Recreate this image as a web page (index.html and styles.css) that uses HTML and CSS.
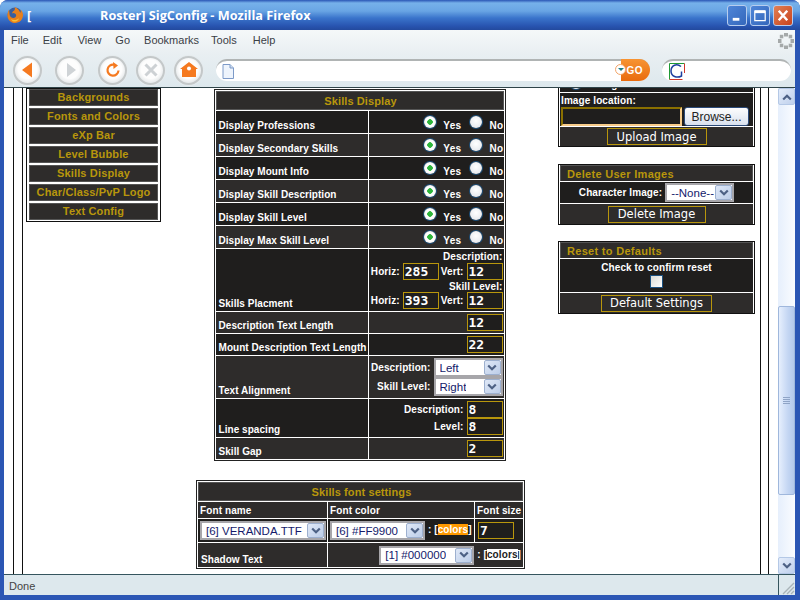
FILE: index.html
```html
<!DOCTYPE html>
<html lang="en">
<head>
<meta charset="utf-8">
<title>Roster SigConfig - Mozilla Firefox</title>
<link rel="stylesheet" href="styles.css">
</head>
<body>
<svg class="defs" width="0" height="0"><defs><symbol id="chev" viewBox="0 0 10 8"><path d="M1.2 1.5L5 5.3L8.8 1.5" fill="none" stroke="#4d6185" stroke-width="2.2"/></symbol></defs></svg>
<div class="window">
  <header class="titlebar">
    <svg class="fxlogo" width="18" height="18" viewBox="0 0 18 18"><circle cx="9" cy="9" r="7.5" fill="#3a5f9e"/><path d="M3 3.5C2 6 1 8 1.6 11C2.6 15.2 6 17 9 17C13.6 17 17 13.400 17 9C17 6.500 15.800 4.500 14.500 3.400C15 5 14.800 6 14.200 6.800C13.500 4.200 11.500 1.800 8.500 1C9.300 2.600 9 3.800 8 4.700C6.800 5.400 6 6.200 6.200 7.500C6.800 6.800 8 6.800 9 7.500C10.800 8.500 10.500 11 8.500 11.800C6.500 12.500 4.500 11.500 3.800 9.500C3.200 7.500 3.500 5.500 3 3.500Z" fill="#e8801c"/><path d="M5 13C7 14.500 11 14.500 13 12C12.500 15 9.500 16 7.500 15.500C6.500 15.200 5.500 14.200 5 13Z" fill="#f7c338"/></svg>
    <span class="title-a">[</span>
    <span class="title-b">Roster] SigConfig - Mozilla Firefox</span>
    <div class="winbtns">
      <span class="winbtn"><svg width="19" height="19" viewBox="0 0 19 19"><rect x="5" y="12" width="7" height="3" fill="#fff"/></svg></span>
      <span class="winbtn"><svg width="19" height="19" viewBox="0 0 19 19"><path d="M4 5h11v10H4z" fill="none" stroke="#fff" stroke-width="1.300"/><rect x="4" y="4" width="11" height="3" fill="#fff"/></svg></span>
      <span class="winbtn close"><svg width="19" height="19" viewBox="0 0 19 19"><path d="M5 4.500L14 14.500M14 4.500L5 14.500" stroke="#fff" stroke-width="2.600"/></svg></span>
    </div>
  </header>
  <nav class="menubar">
    <span class="m1">File</span><span class="m2">Edit</span><span class="m3">View</span><span class="m4">Go</span><span class="m5">Bookmarks</span><span class="m6">Tools</span><span class="m7">Help</span>
    <svg class="throbber" width="18" height="18" viewBox="0 0 18 18"><g fill="#a5a9a9"><rect x="7" y="1" width="4" height="3.500"/><rect x="7" y="13.500" width="4" height="3.500"/><rect x="1" y="7" width="3.500" height="4"/><rect x="13.500" y="7" width="3.500" height="4"/><rect x="2.800" y="2.800" width="3.500" height="3.500"/><rect x="11.700" y="2.800" width="3.500" height="3.500"/><rect x="2.800" y="11.700" width="3.500" height="3.500"/><rect x="11.700" y="11.700" width="3.500" height="3.500"/></g></svg>
  </nav>
  <div class="toolbar">
    <span class="tb"><svg width="16" height="18" viewBox="0 0 16 18"><path d="M12 1.500V16.500L2 9Z" fill="#f5791f"/></svg></span>
    <span class="tb tb2"><svg width="16" height="18" viewBox="0 0 16 18"><path d="M5 2V16L14 9Z" fill="#cfd3d6"/></svg></span>
    <span class="tb tb3"><svg width="18" height="18" viewBox="0 0 18 18"><path d="M14.500 9.500A5.500 5.500 0 1 1 10 3.700" fill="none" stroke="#f5791f" stroke-width="2.200"/><path d="M9 1L14 4.500L9.500 8Z" fill="#f5791f"/></svg></span>
    <span class="tb tb4"><svg width="16" height="16" viewBox="0 0 16 16"><path d="M2.500 2.500L13.500 13.500M13.500 2.500L2.500 13.500" stroke="#cdd1d4" stroke-width="3"/></svg></span>
    <span class="tb tb5"><svg width="18" height="18" viewBox="0 0 18 18"><path d="M9 1L18 8H16V16H2V8H0Z" fill="#f5791f"/><circle cx="9" cy="7.500" r="2" fill="#fff"/></svg></span>
    <div class="urlbar">
      <svg width="12" height="15" viewBox="0 0 12 15"><path d="M1 .5H8L11.500 4V14.500H1Z" fill="#eef4fc" stroke="#7d9ac8"/><path d="M8 .5V4H11.500" fill="#cfdcf0" stroke="#7d9ac8"/></svg>
      <span class="go"><span class="go-arrow"></span>GO</span>
    </div>
    <div class="search">
      <svg width="16" height="17" viewBox="0 0 16 17"><path d="M.5 16.500V.5H15.500" fill="none" stroke="#1f9a35"/><path d="M.5 16.500H13.500M15.500 .5V10" fill="none" stroke="#d0362a"/><path d="M12 3.500C8 0 2 2 2 8C2 13.500 8 15.500 12.500 13V8.500" fill="none" stroke="#1d3f9e" stroke-width="1.500"/></svg>
    </div>
  </div>
  <div class="viewport">
    <main class="page">
      <div class="frame">
        <div class="frame-in">
          <div class="col-nav">
            <ul class="sidenav">
              <li>Backgrounds</li><li>Fonts and Colors</li><li>eXp Bar</li><li>Level Bubble</li><li>Skills Display</li><li>Char/Class/PvP Logo</li><li>Text Config</li>
            </ul>
          </div>
          <div class="col-mid">
            <table class="tbl skills">
              <colgroup><col class="c-lab"><col></colgroup>
              <tr class="hd"><th colspan="2">Skills Display</th></tr>
              <tr class="r a"><td class="lab">Display Professions</td><td class="rad"><input type="radio" name="p1" checked> Yes <input type="radio" name="p1"> No</td></tr>
              <tr class="r b"><td class="lab">Display Secondary Skills</td><td class="rad"><input type="radio" name="p2" checked> Yes <input type="radio" name="p2"> No</td></tr>
              <tr class="r a"><td class="lab">Display Mount Info</td><td class="rad"><input type="radio" name="p3" checked> Yes <input type="radio" name="p3"> No</td></tr>
              <tr class="r b"><td class="lab">Display Skill Description</td><td class="rad"><input type="radio" name="p4" checked> Yes <input type="radio" name="p4"> No</td></tr>
              <tr class="r a"><td class="lab">Display Skill Level</td><td class="rad"><input type="radio" name="p5" checked> Yes <input type="radio" name="p5"> No</td></tr>
              <tr class="r b"><td class="lab">Display Max Skill Level</td><td class="rad"><input type="radio" name="p6" checked> Yes <input type="radio" name="p6"> No</td></tr>
              <tr class="a h62"><td class="lab">Skills Placment</td><td class="val">
                <div class="cap">Description:</div>
                <div class="pair"><span>Horiz:</span><input class="ti w36" value="285"><span class="gap">Vert:</span><input class="ti w36" value="12"></div>
                <div class="cap">Skill Level:</div>
                <div class="pair"><span>Horiz:</span><input class="ti w36" value="393"><span class="gap">Vert:</span><input class="ti w36" value="12"></div>
              </td></tr>
              <tr class="b h21"><td class="lab">Description Text Length</td><td class="val end"><input class="ti w36" value="12"></td></tr>
              <tr class="a h21"><td class="lab">Mount Description Text Length</td><td class="val end"><input class="ti w36" value="22"></td></tr>
              <tr class="b h42"><td class="lab">Text Alignment</td><td class="val">
                <div class="selrow"><span>Description:</span><span class="sel s69"><span class="stext">Left</span><span class="sbtn"><svg width="10" height="8"><use href="#chev"/></svg></span></span></div>
                <div class="selrow"><span>Skill Level:</span><span class="sel s69"><span class="stext">Right</span><span class="sbtn"><svg width="10" height="8"><use href="#chev"/></svg></span></span></div>
              </td></tr>
              <tr class="a h38"><td class="lab">Line spacing</td><td class="val">
                <div class="selrow tight"><span>Description:</span><input class="ti w36" value="8"></div>
                <div class="selrow tight"><span>Level:</span><input class="ti w36" value="8"></div>
              </td></tr>
              <tr class="b h21"><td class="lab">Skill Gap</td><td class="val end"><input class="ti w36" value="2"></td></tr>
            </table>
            <table class="tbl fonts">
              <colgroup><col class="c-f1"><col class="c-f2"><col></colgroup>
              <tr class="hd"><th colspan="3">Skills font settings</th></tr>
              <tr class="b fh"><td>Font name</td><td>Font color</td><td>Font size</td></tr>
              <tr class="a fr"><td><span class="sel s126"><span class="stext">[6] VERANDA.TTF</span><span class="sbtn"><svg width="10" height="8"><use href="#chev"/></svg></span></span></td>
                <td class="cc"><span class="sel s95"><span class="stext">[6] #FF9900</span><span class="sbtn"><svg width="10" height="8"><use href="#chev"/></svg></span></span> : [<span class="hl">colors</span>]</td>
                <td><input class="ti w36 fs" value="7"></td></tr>
              <tr class="b fs-r"><td class="lab">Shadow Text</td><td colspan="2" class="shadow"><span class="sel s95"><span class="stext">[1] #000000</span><span class="sbtn"><svg width="10" height="8"><use href="#chev"/></svg></span></span> : [<span class="hl2">colors</span>]</td></tr>
            </table>
          </div>
          <div class="col-right">
            <section class="panel p1">
              <div class="row cut a"><input type="radio" class="dim"><span>Background</span></div>
              <div class="row loc a"><div class="loclab">Image location:</div><div class="file"><input class="fileinput"><span class="browse">Browse...</span></div></div>
              <div class="row ctr b btnrow"><button class="btn w100">Upload Image</button></div>
            </section>
            <section class="panel p2">
              <div class="phd">Delete User Images</div>
              <div class="row ctr a charrow"><span>Character Image:</span><span class="sel s69"><span class="stext">--None--</span><span class="sbtn"><svg width="10" height="8"><use href="#chev"/></svg></span></span></div>
              <div class="row ctr b btnrow big"><button class="btn w98">Delete Image</button></div>
            </section>
            <section class="panel p3">
              <div class="phd">Reset to Defaults</div>
              <div class="row a reset"><div>Check to confirm reset</div><input type="checkbox" class="cb"></div>
              <div class="row ctr b btnrow big"><button class="btn w111">Default Settings</button></div>
            </section>
          </div>
        </div>
      </div>
    </main>
    <div class="vscroll">
      <span class="sb-btn"><svg width="10" height="8" viewBox="0 0 10 8"><path d="M1.200 6.500L5 2.700L8.800 6.500" fill="none" stroke="#4d6185" stroke-width="2.200"/></svg></span>
      <div class="sb-track">
        <div class="sb-thumb"><span class="grip"></span></div>
      </div>
      <span class="sb-btn"><svg width="10" height="8"><use href="#chev"/></svg></span>
    </div>
  </div>
  <footer class="status"><span class="done">Done</span><span class="grip-box"><svg width="16" height="16" viewBox="0 0 16 16"><path d="M15 4L4 15M15 8L8 15M15 12L12 15" stroke="#a9b4b8" stroke-width="1.400"/></svg></span></footer>
</div>
</body>
</html>
```

FILE: styles.css
```css
* { box-sizing: border-box; }
html, body { margin: 0; padding: 0; width: 800px; height: 600px; overflow: hidden; }
body { font-family: "Liberation Sans", sans-serif; background: #fff; }
.defs { position: absolute; }
.window { width: 800px; height: 600px; display: flex; flex-direction: column; background: #2b56b4; padding: 0 5px 5px 4px; border-radius: 8px 8px 0 0; overflow: hidden; }

.titlebar { flex: 0 0 30px; margin: 0 -5px 0 -4px; padding: 0 7px 0 5px; display: flex; align-items: center; background: linear-gradient(#2a55b5 0, #76b1ea 3px, #69a5e4 11px, #3a74cb 18px, #2854b0 26px, #234a9e 30px); color: #fff; font: bold 12.700px "Open Sans", sans-serif; }
.fxlogo { flex: none; margin: -1px 0 0 1px; }
.title-a { margin-left: 3px; width: 73px; }
.title-b { flex: 1; }
.winbtns { display: flex; gap: 3px; }
.winbtn { width: 20px; height: 21px; border: 1px solid #b7cdee; border-radius: 3px; background: linear-gradient(135deg, #4f86d8, #3467bb); display: flex; align-items: center; justify-content: center; }
.close { background: linear-gradient(135deg, #e28055, #c8431d); }

.menubar { flex: 0 0 23px; position: relative; display: flex; align-items: center; background: linear-gradient(#f5f8f9, #e9eff2); font: 11px "Liberation Sans", sans-serif; color: #3a4046; padding: 0 0 3px 7px; }
.m1 { margin-right: 14px; } .m2 { margin-right: 16px; } .m3 { margin-right: 14px; } .m4 { margin-right: 14px; } .m5 { margin-right: 12px; } .m6 { margin-right: 16px; }
.throbber { position: absolute; right: 0; top: 2px; }

.toolbar { flex: 0 0 34px; display: flex; align-items: center; background: linear-gradient(#e9eff2, #dde8ed); padding-left: 9px; }
.tb { flex: none; width: 29px; height: 29px; border-radius: 50%; background: radial-gradient(circle at 50% 45%, #fdfdfd 50%, #dfe3e5 80%); border: 2px solid #c4c8c9; display: flex; align-items: center; justify-content: center; box-shadow: 0 0 0 1px #e5ebee; }
.tb2 { margin-left: 13px; } .tb3 { margin-left: 14px; } .tb4 { margin-left: 9px; } .tb5 { margin-left: 9px; }
.urlbar { flex: none; width: 434px; height: 22px; margin-left: 13px; position: relative; background: #fff; border-top: 2px solid #b0b4b4; border-radius: 11px; display: flex; align-items: center; padding-left: 6px; }
.go { position: absolute; right: 0; top: -2px; width: 29px; height: 22px; background: linear-gradient(#f79433, #e96b0d); border-radius: 0 11px 11px 0; color: #fff; font: bold 10px "Liberation Sans", sans-serif; letter-spacing: .5px; display: flex; align-items: center; justify-content: flex-end; padding-right: 7px; }
.go-arrow { position: absolute; left: -6px; top: 5px; width: 11px; height: 11px; border-radius: 50%; background: #fff; border: 1px solid #f3a468; }
.go-arrow::after { content: ""; position: absolute; left: 2px; top: 3px; border: 3px solid transparent; border-top: 3px solid #1d7f86; }
.search { flex: none; width: 129px; height: 22px; margin-left: 12px; background: #fff; border-top: 2px solid #b0b4b4; border-radius: 11px; display: flex; align-items: center; padding-left: 7px; }

.viewport { flex: 1; min-height: 0; display: flex; background: #fff; border-top: 1px solid #2f4449; }
.page { flex: 1; min-width: 0; overflow: hidden; }
.frame { height: 100%; margin: 0 9px 0 9px; border: solid #111; border-width: 0 1px; padding: 0 7px 0 8px; }
.frame-in { height: 100%; border: solid #111; border-width: 0 1px; display: flex; align-items: flex-start; padding: 0 5px 0 3px; }

.col-nav { flex: 0 0 135px; }
.sidenav { list-style: none; margin: 0; padding: 0 2px 1px; border: 1px solid #111; background: #fff; }
.sidenav li { height: 17px; margin-bottom: 2px; background: #2e2c2b; border: 1px solid #555; color: #b8960c; font: bold 11px/15px "Liberation Sans", sans-serif; text-align: center; letter-spacing: .15px; }
.sidenav li:last-child { margin-bottom: 0; }

.col-mid { flex: 1; min-width: 0; display: flex; flex-direction: column; align-items: center; padding-top: 2px; }
.tbl { border-collapse: separate; border-spacing: 1px 1px; background: #fff; outline: 1px solid #222; color: #fff; font: bold 10px "Liberation Sans", sans-serif; letter-spacing: .1px; }
.tbl td, .tbl th { padding: 0; }
.skills { width: 290px; table-layout: fixed; }
.c-lab { width: 152px; }
.hd th { background: #2e2c2b; color: #b8960c; height: 19px; font: bold 11px "Liberation Sans", sans-serif; letter-spacing: .1px; padding-left: 2px; box-shadow: inset 0 0 0 1px #555; }
.a td { background: #1f1e1d; }
.b td { background: #2e2c2b; }
.r td { height: 22px; }
.lab { vertical-align: bottom; padding: 0 0 2px 3px !important; white-space: nowrap; letter-spacing: .05px; }
.rad { vertical-align: bottom; text-align: right; padding: 0 0 1px !important; white-space: nowrap; line-height: 12px; letter-spacing: .3px; }
input[type=radio] { appearance: none; width: 12px; height: 12px; margin: 0 4px 0 6px; border-radius: 50%; vertical-align: 1px; background: radial-gradient(circle at 50% 40%, #fff, #dfe3ea); box-shadow: 0 0 0 1px #1d4f7a; }
input[type=radio]:checked { background: radial-gradient(circle, #2eb53c 0 2.500px, #fff 3px 4px, #dfe3ea); }
.h62 td { height: 62px; } .h21 td { height: 21px; } .h42 td { height: 42px; } .h38 td { height: 38px; }
.val { padding: 0 1px 0 2px !important; vertical-align: top; text-align: right; }
.end { vertical-align: middle; }
.cap { height: 13px; line-height: 13px; margin-top: 1px; }
.cap + .pair + .cap { margin-top: 0; height: 12px; }
.pair { display: flex; align-items: center; justify-content: flex-end; height: 17px; }
.pair .gap { margin-left: 2px; }
.pair span { padding-right: 3px; }
.ti { height: 17px; background: #1f1e1d; border: 1px solid #b8960c; color: #fff; font: bold 13px "DejaVu Sans Mono", monospace; padding: 0 0 1px 1px; margin: 0; outline: 0; vertical-align: top; }
.w36 { width: 36px; flex: none; }
.selrow { display: flex; align-items: center; justify-content: flex-end; gap: 3px; height: 19px; margin-top: 2px; }
.selrow + .selrow { margin-top: 0; }
.selrow.tight { height: 17px; }
.sel { flex: none; display: inline-flex; align-items: center; justify-content: space-between; height: 19px; background: #fff; border: 2px solid #a7a6aa; color: #141a6b; font: 11.500px "Liberation Sans", sans-serif; letter-spacing: 0; padding: 0 0 0 4px; vertical-align: middle; text-align: left; }
.stext { overflow: hidden; white-space: nowrap; }
.sbtn { flex: none; width: 17px; height: 15px; background: linear-gradient(135deg, #dfe8f7, #bccde8); border: 1px solid #9db0cf; border-radius: 2px; display: flex; align-items: center; justify-content: center; }
.s69 { width: 69px; }
.s126 { width: 126px; }
.s95 { width: 95px; }

.fonts { width: 327px; margin: 21px 0 0 2px; table-layout: fixed; }
.c-f1 { width: 129px; } .c-f2 { width: 146px; }
.fonts .hd th { height: 19px; }
.fh td { height: 16px; padding-left: 2px !important; vertical-align: middle; white-space: nowrap; }
.fr td { height: 23px; vertical-align: middle; padding-left: 2px !important; white-space: nowrap; }
.fs-r td { height: 24px; }
.shadow { text-align: right; vertical-align: middle; padding-right: 2px !important; white-space: nowrap; }
.hl { background: #ff9900; color: #fff; }
.hl2 { background: #fff; color: #222; }
.fs { margin-left: 1px; }

.col-right { flex: 0 0 197px; margin-top: -30px; display: flex; flex-direction: column; gap: 16px; color: #fff; font: bold 10px "Liberation Sans", sans-serif; letter-spacing: .1px; }
.panel { border: 1px solid #111; background: #fff; display: flex; flex-direction: column; gap: 1px; padding: 0 1px; }
.p1 { margin-bottom: 1px; }
.row { background: #1f1e1d; }
.row.b { background: #2e2c2b; }
.ctr { display: flex; align-items: center; justify-content: center; }
.cut { height: 33px; display: flex; align-items: flex-end; padding: 0 0 1px 10px; line-height: 12px; }
.cut .dim { margin: 0 5px 2px 0; flex: none; }
.loc { height: 33px; padding: 0 0 0 1px; }
.loclab { height: 14px; line-height: 15px; }
.file { display: flex; align-items: stretch; height: 19px; }
.fileinput { width: 121px; background: #1f1e1d; border: 2px solid #8a7000; border-right-color: #f7cc8a; border-bottom-color: #f7cc8a; margin: 0; padding: 0; outline: 0; }
.browse { width: 65px; margin-left: 2px; background: linear-gradient(#fdfdfd, #d9e1ee); border: 1px solid #2b4a78; border-radius: 3px; color: #222; font: 12px "Liberation Sans", sans-serif; letter-spacing: 0; display: flex; align-items: center; justify-content: center; }
.btnrow { height: 19px; }
.btnrow.big { height: 20px; }
.btn { height: 17px; background: #2e2c2b; border: 1px solid #b8960c; color: #fff; font: 11.500px "DejaVu Sans", sans-serif; padding: 0; }
.w100 { width: 100px; } .w98 { width: 98px; } .w111 { width: 111px; }
.phd { height: 16px; background: #2e2c2b; box-shadow: inset 1px 1px 0 #555, inset -1px 0 0 #555; color: #b8960c; font: bold 11px/18px "Liberation Sans", sans-serif; letter-spacing: .3px; padding-left: 7px; }
.charrow { height: 21px; gap: 3px; }
.reset { height: 33px; text-align: center; padding-top: 2px; line-height: 13px; }
.cb { appearance: none; display: block; width: 13px; height: 13px; margin: 1px auto 0; background: linear-gradient(135deg, #dcdcd6, #fff); border: 1px solid #1c5180; }

.vscroll { flex: 0 0 17px; background: linear-gradient(90deg, #e6effc, #fafcff); display: flex; flex-direction: column; }
.sb-btn { flex: none; height: 17px; border: 1px solid #b4c8e6; border-radius: 2px; background: linear-gradient(135deg, #e4edfb, #bfd0ec); display: flex; align-items: center; justify-content: center; }
.sb-track { flex: 1; padding-top: 201px; }
.sb-thumb { height: 189px; border: 1px solid #9fb7dc; border-radius: 2px; background: linear-gradient(90deg, #e6effd, #c4d6f3 60%, #b4c9ea); display: flex; align-items: center; justify-content: center; }
.grip { width: 7px; height: 8px; background: repeating-linear-gradient(#8fa4c6 0 1px, transparent 1px 2px); }

.status { flex: 0 0 21px; display: flex; justify-content: space-between; background: #dde8ed; border-top: 1px solid #35555e; font: 11px "Liberation Sans", sans-serif; color: #444; }
.done { padding: 5px 0 0 5px; }
.grip-box { width: 17px; border-left: 1px solid #35555e; display: flex; align-items: flex-end; justify-content: flex-end; }
```
